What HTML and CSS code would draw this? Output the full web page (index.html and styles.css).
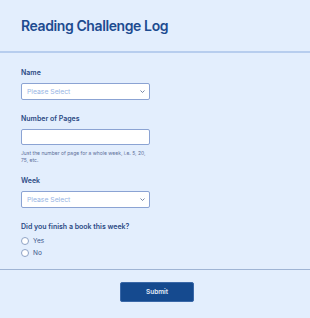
FILE: index.html
```html
<!DOCTYPE html>
<html>
<head>
    <link rel="stylesheet" href="styles.css">
</head>
<body>
    <div class="header">
        <h1 class="title">Reading Challenge Log</h1>
    </div>

    <form class="form">
        <!-- Name -->
        <div class="field">
            <label class="label">Name</label>
            <div class="select">
                <span class="placeholder">Please Select</span>
                <svg class="chevron" width="5" height="3" viewBox="0 0 5 3"><path d="M0.5 0.5 L2.5 2.5 L4.5 0.5" fill="none" stroke="#56698f" stroke-width="0.8"/></svg>
            </div>
        </div>

        <!-- Number of pages -->
        <div class="field">
            <label class="label">Number of Pages</label>
            <div class="input"></div>
            <p class="hint">Just the number of page for a whole week, i.e. 5, 20, 75, etc.</p>
        </div>

        <!-- Week -->
        <div class="field field-week">
            <label class="label">Week</label>
            <div class="select">
                <span class="placeholder">Please Select</span>
                <svg class="chevron" width="5" height="3" viewBox="0 0 5 3"><path d="M0.5 0.5 L2.5 2.5 L4.5 0.5" fill="none" stroke="#56698f" stroke-width="0.8"/></svg>
            </div>
        </div>

        <!-- Finished a book -->
        <div class="field">
            <label class="label">Did you finish a book this week?</label>
            <div class="radio-row"><span class="radio"></span>Yes</div>
            <div class="radio-row"><span class="radio"></span>No</div>
        </div>
    </form>

    <div class="footer">
        <button type="button" class="submit-button">Submit</button>
    </div>
</body>
</html>
```

FILE: styles.css
```css
body {
    margin: 0;
    background: #e3eefd;
    font-family: Inter, "Noto Sans", sans-serif;
    color: #2b4984;
}

.header {
    height: 51px;
    padding: 0 21px;
    display: flex;
    align-items: center;
    border-bottom: 2px solid #b7cdee;
}

.title {
    margin: 0;
    font-size: 14px;
    font-weight: 600;
    color: #1d4b90;
    letter-spacing: -0.4px;
}

.form {
    padding: 0 21px 12px;
}

.field {
    margin-top: 14px;
}

.field:first-child {
    margin-top: 15px;
}

.field-week {
    margin-top: 13px;
}

.label {
    display: block;
    font-size: 7px;
    font-weight: 600;
    line-height: 10px;
    margin-bottom: 5px;
}

.select,
.input {
    width: 129px;
    height: 16.5px;
    box-sizing: border-box;
    background: white;
    border: 1px solid #8ba3d3;
    border-radius: 2px;
}

.select {
    display: flex;
    align-items: center;
    justify-content: space-between;
    padding: 0 4px 0 5px;
}

.placeholder {
    font-size: 6.8px;
    color: #98b5e4;
}

.hint {
    width: 129px;
    margin: 5px 0 0;
    font-size: 5px;
    line-height: 6.5px;
    color: #5c6f99;
}

.radio-row {
    display: flex;
    align-items: center;
    height: 8px;
    margin-top: 5px;
    font-size: 6.5px;
    color: #3a5489;
}

.radio-row + .radio-row {
    margin-top: 4.5px;
}

.radio {
    width: 8px;
    height: 8px;
    box-sizing: border-box;
    border: 1px solid #8fa3c6;
    border-radius: 50%;
    background: white;
    margin-right: 4px;
}

.footer {
    border-top: 1px solid #9fb4d4;
    display: flex;
    justify-content: center;
    padding-top: 12px;
}

.submit-button {
    width: 74px;
    height: 20px;
    margin-left: 4px;
    background: #154a8f;
    border: 1px solid #3a68a8;
    border-radius: 2px;
    color: #e4ecf8;
    font-family: Inter, sans-serif;
    font-size: 6.5px;
    font-weight: 600;
    cursor: pointer;
}
```
